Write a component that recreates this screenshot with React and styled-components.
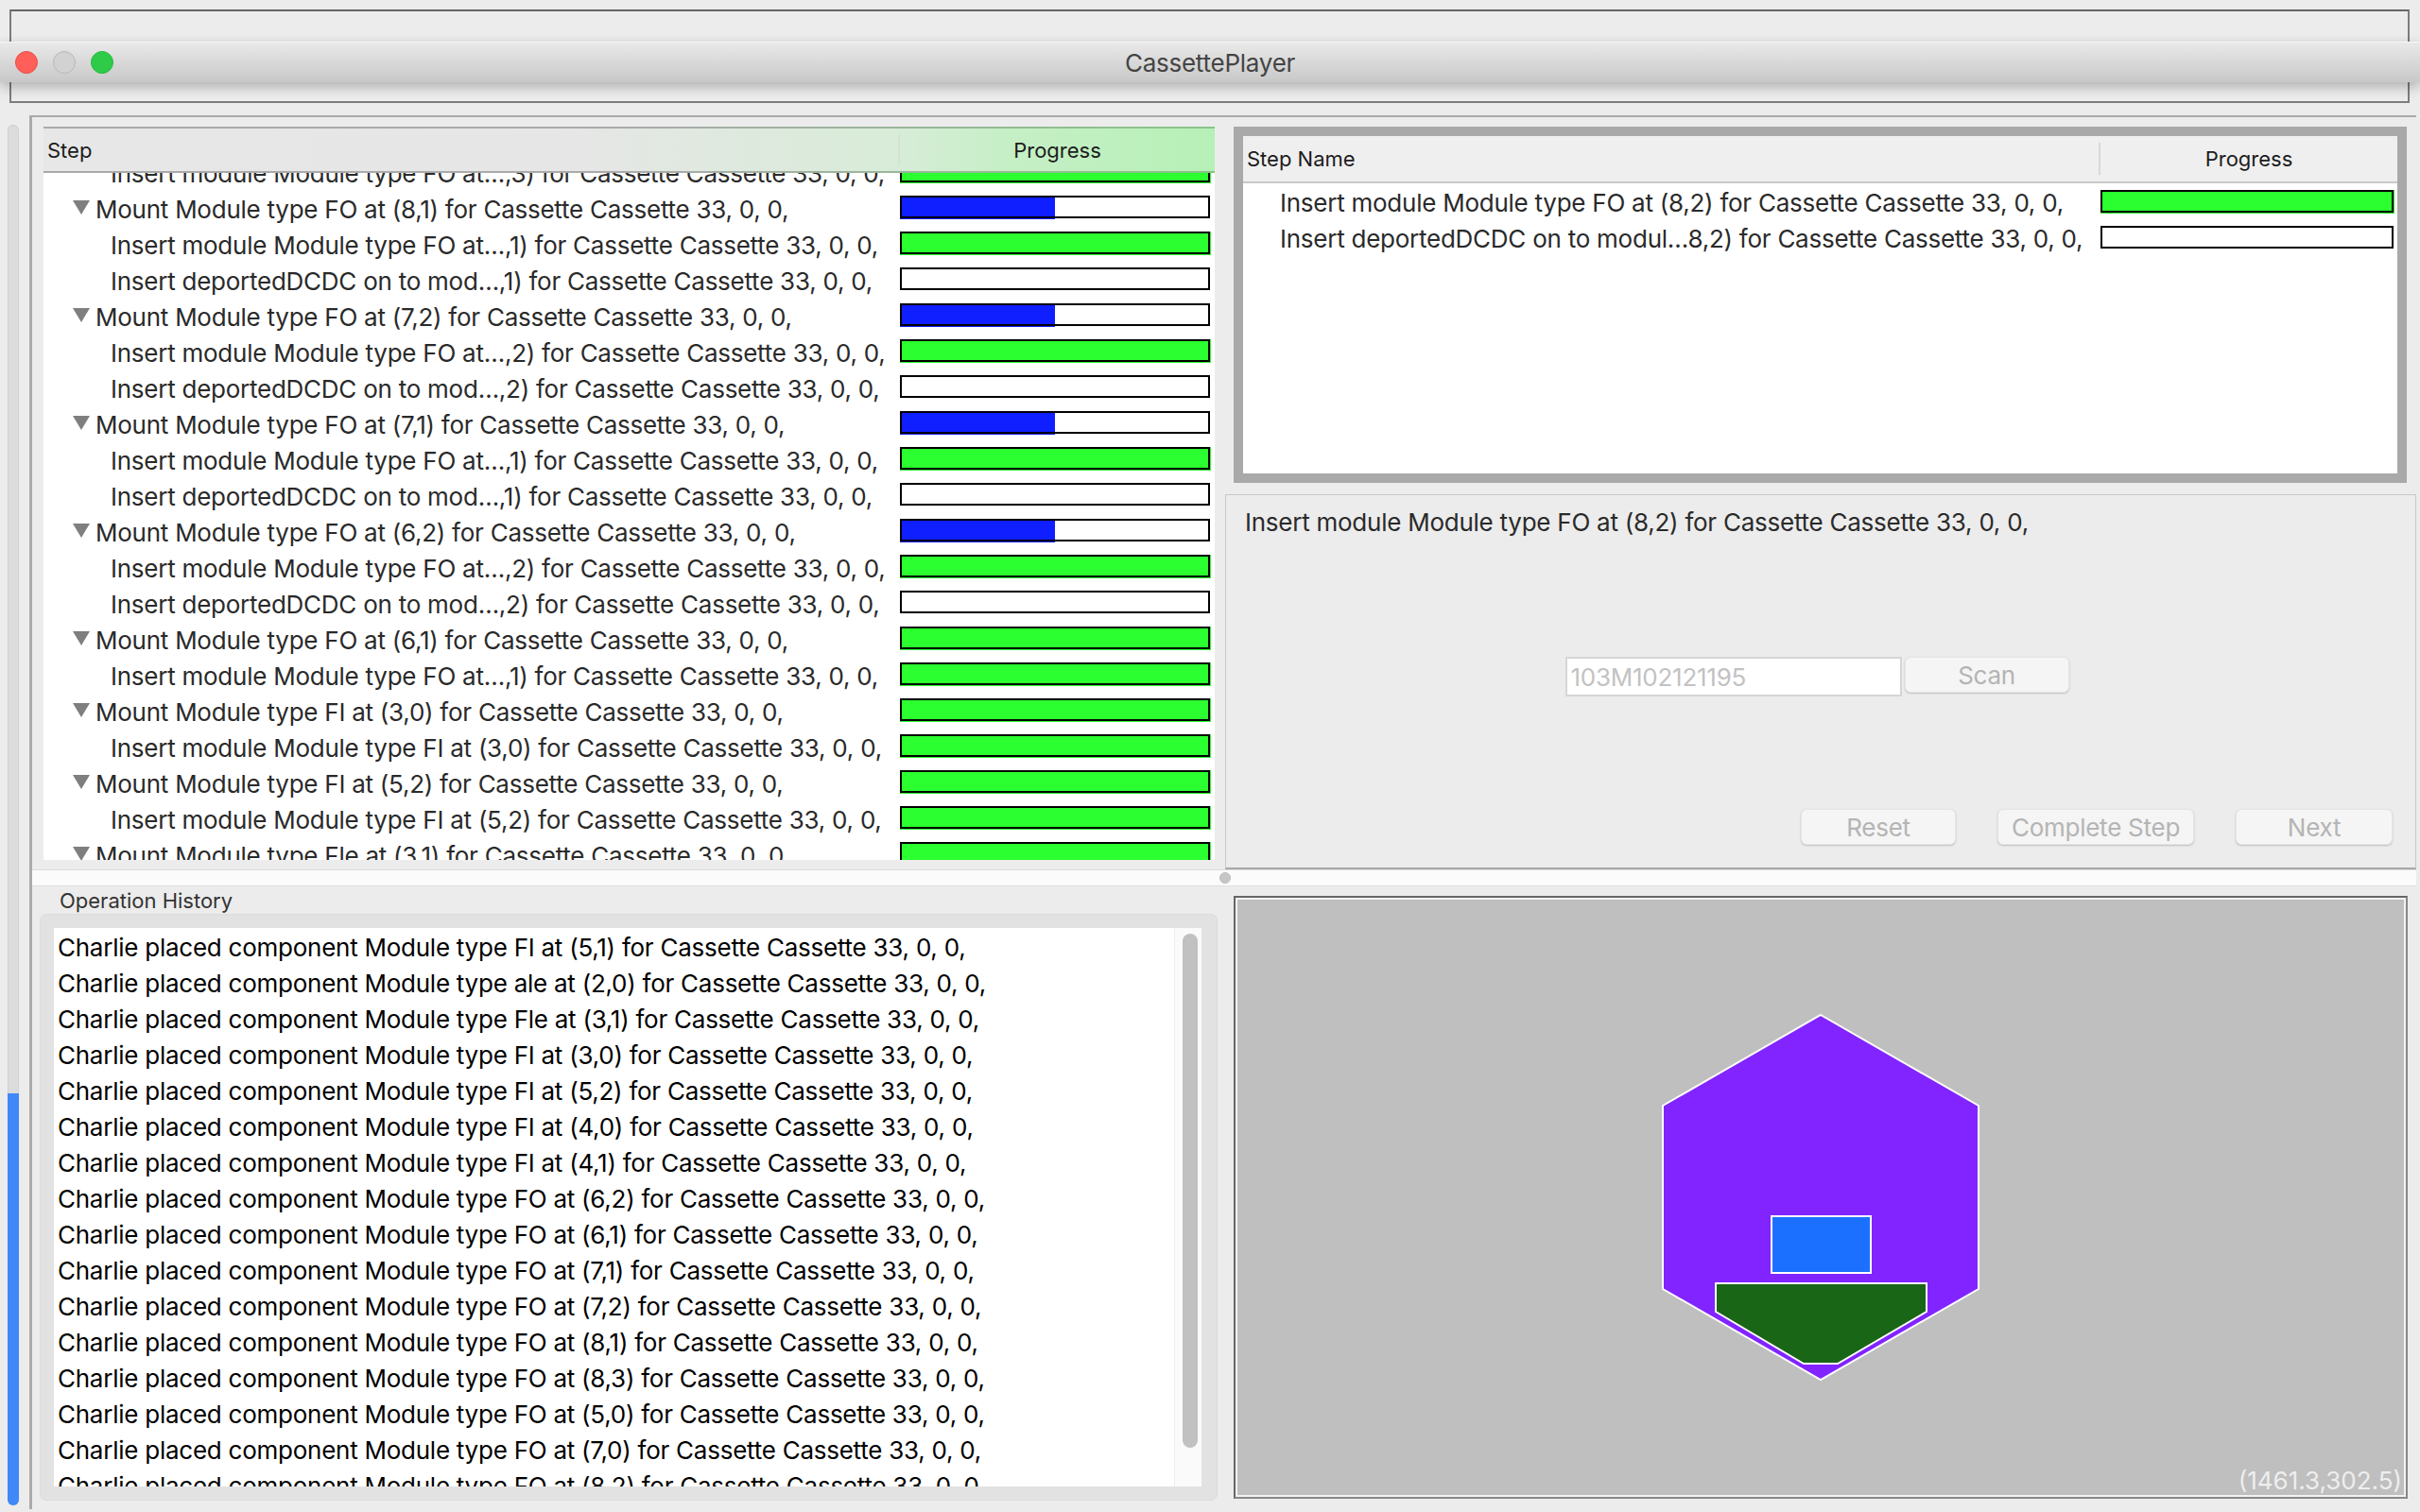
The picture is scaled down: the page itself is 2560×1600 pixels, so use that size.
import React from "react";
import styled, { createGlobalStyle } from "styled-components";

const GlobalStyle = createGlobalStyle`
  html, body {
    margin: 0;
    padding: 0;
    background: #ececec;
  }
  * {
    box-sizing: border-box;
  }
`;

const Page = styled.div`
  position: relative;
  width: 2560px;
  height: 1600px;
  overflow: hidden;
  background: #ececec;
  font-family: Inter, "Liberation Sans", sans-serif;
  font-size: 26px;
  letter-spacing: -0.25px;
  color: #2a2a2a;
`;

const TopFrame = styled.div`
  width: 2539px;
  height: 99px;
  margin: 10px 0 0 10px;
  border: 2px solid #7c7c7c;
  border-top-color: #666;
`;

const TitleBar = styled.div`
  position: absolute;
  top: 44px;
  left: 0;
  right: 0;
  height: 43px;
  display: flex;
  align-items: center;
  justify-content: center;
  background: linear-gradient(180deg, #e9e9e9 0%, #c8c8c8 100%);
  border-top: 1px solid #f6f6f6;
  box-shadow: 0 5px 14px rgba(0, 0, 0, 0.26);
  color: #444;
`;

const Lights = styled.div`
  position: absolute;
  left: 16px;
  top: 9px;
  display: flex;
  gap: 16px;
`;

const Light = styled.span`
  width: 24px;
  height: 24px;
  border-radius: 50%;
  background: ${(p) => p.$color};
  border: 1px solid ${(p) => p.$edge};
`;

const Body = styled.div`
  display: flex;
  margin-top: 13px;
`;

const WindowScroll = styled.div`
  display: flex;
  flex-direction: column;
  justify-content: flex-end;
  width: 12px;
  height: 1461px;
  margin: 10px 11px 0 8px;
  border-radius: 6px;
  background: #dcdcdc;
  box-shadow: inset 0 0 0 1px #d0d0d0;
`;

const WindowThumb = styled.div`
  height: 436px;
  border-radius: 0 0 6px 6px;
  background: #3f88f8;
`;

const MainFrame = styled.div`
  width: 2525px;
  height: 1475px;
  border-top: 2px solid #aaa;
  border-left: 3px solid #aaa;
`;

const TopRow = styled.div`
  display: flex;
  height: 796px;
`;

const TreePane = styled.div`
  width: 1262px;
  padding: 10px 11px 10px 12px;
`;

const TreeTable = styled.div`
  display: flex;
  flex-direction: column;
  height: 100%;
  background: #fff;
`;

const Header = styled.div`
  flex: none;
  display: flex;
  align-items: center;
  height: ${(p) => p.$height}px;
  font-size: 22px;
  letter-spacing: 0;
  color: #1c1c1c;
  border-bottom: 2px solid #c9c9c9;
`;

const TreeHeader = styled(Header)`
  position: relative;
  z-index: 1;
  border-top: 2px solid #aaa;
  border-image: linear-gradient(90deg, #aaa 0%, #aaa 50%, #88c488 100%) 1;
  border-bottom: 2px solid #c4c4c4;
  border-image-slice: 1;
  background: linear-gradient(90deg, #e7e7e7 0%, #e6e6e6 45%, #d8ecd8 73%, #c6efc6 82%, #b7f0b7 100%);
`;

const StepCell = styled.div`
  width: ${(p) => p.$width}px;
  padding-left: 4px;
`;

const ProgressCell = styled.div`
  flex: 1;
  height: 34px;
  line-height: 34px;
  text-align: center;
  border-left: 2px solid ${(p) => p.$divider};
`;

const RowClip = styled.div`
  flex: 1;
  overflow: hidden;
`;

const TreeRows = styled.div`
  margin-top: -21px;
`;

const Row = styled.div`
  display: flex;
  align-items: center;
  height: 38px;
  white-space: nowrap;
`;

const StepText = styled.div`
  display: flex;
  align-items: center;
  width: ${(p) => p.$width}px;
  padding-left: ${(p) => p.$indent}px;
  padding-top: ${(p) => p.$nudge}px;
  overflow: hidden;
`;

const Disclosure = styled.span`
  flex: none;
  width: 0;
  height: 0;
  margin: 0 6px 4px 0;
  border-left: 9px solid transparent;
  border-right: 9px solid transparent;
  border-top: 15px solid #7f7f7f;
`;

const Track = styled.div`
  position: relative;
  flex: none;
  width: ${(p) => p.$width}px;
  height: 24px;
  background: #fff;
  &::after {
    content: "";
    position: absolute;
    inset: 0;
    border: 2px solid #000;
  }
`;

const Fill = styled.div`
  position: absolute;
  left: 0;
  top: 0;
  height: 25px;
  width: calc(${(p) => p.$value}% + ${(p) => (p.$value === 100 ? 1 : 0)}px);
  background: ${(p) => (p.$value === 100 ? "#2bff2f" : "#0f1fff")};
`;

const RightPane = styled.div`
  display: flex;
  flex-direction: column;
  flex: 1;
`;

const ResultFrame = styled.div`
  height: 377px;
  margin: 10px 10px 0 9px;
  border: 10px solid #a9a9a9;
  background: #fff;
`;

const ResultHeader = styled(Header)`
  background: #efefef;
`;

const DetailPanel = styled.div`
  display: flex;
  flex-direction: column;
  height: 397px;
  margin-top: 12px;
  padding: 14px 24px 0 20px;
  border: 1px solid #c8c8c8;
  border-bottom: 2px solid #a8a8a8;
`;

const DetailTitle = styled.div`
  height: 30px;
  line-height: 30px;
`;

const ScanRow = styled.div`
  display: flex;
  align-items: flex-start;
  justify-content: center;
  gap: 3px;
  margin: 127px 0 0 -4px;
`;

const ScanInput = styled.input`
  width: 356px;
  height: 42px;
  padding: 0 4px;
  background: #fff;
  border: 2px solid #d6d6d6;
  border-radius: 0;
  outline: none;
  font: inherit;
  letter-spacing: inherit;
  color: #c2c2c2;
  -webkit-text-fill-color: #c2c2c2;
  opacity: 1;
`;

const Button = styled.div`
  display: flex;
  align-items: center;
  justify-content: center;
  width: ${(p) => p.$width}px;
  height: 38px;
  background: #f5f5f5;
  border: 1px solid #e4e4e4;
  border-radius: 6px;
  box-shadow: 0 1px 2px rgba(0, 0, 0, 0.2);
  color: #b4b4b4;
`;

const ActionRow = styled.div`
  display: flex;
  justify-content: flex-end;
  gap: 44px;
  margin-top: 119px;
`;

const Splitter = styled.div`
  display: flex;
  align-items: center;
  height: 18px;
  padding-left: 1256px;
  background: #fbfbfb;
  border-top: 1px solid #dedede;
  border-bottom: 1px solid #dedede;
`;

const SplitHandle = styled.div`
  width: 12px;
  height: 12px;
  border-radius: 50%;
  background: #c6c6c6;
  border: 1px solid #bcbcbc;
`;

const BottomRow = styled.div`
  display: flex;
  height: 659px;
`;

const HistoryPane = styled.div`
  width: 1262px;
  padding-left: 8px;
`;

const HistoryLabel = styled.div`
  height: 29px;
  padding-left: 21px;
  font-size: 22px;
  letter-spacing: 0;
  line-height: 30px;
  color: #333;
`;

const HistoryBox = styled.div`
  display: flex;
  width: 1246px;
  height: 621px;
  padding: 14px 16px 14px 14px;
  border: 1px solid #dcdcdc;
  border-radius: 7px;
  background: #e2e2e2;
`;

const HistoryList = styled.div`
  flex: 1;
  padding: 2px 0 0 4px;
  overflow: hidden;
  background: #fff;
  color: #000;
`;

const HistoryRow = styled.div`
  height: 38px;
  line-height: 38px;
  white-space: nowrap;
`;

const ListTrack = styled.div`
  flex: none;
  width: 29px;
  padding: 6px 4px 0 8px;
  background: #fafafa;
  border-left: 1px solid #eee;
`;

const ListThumb = styled.div`
  width: 16px;
  height: 544px;
  border-radius: 8px;
  background: #c1c1c1;
`;

const Canvas = styled.div`
  position: relative;
  width: 1242px;
  height: 638px;
  margin: 10px 0 0 9px;
  background: #bfbfbf;
  border: 2px solid #666;
  border-right-color: #888;
  border-bottom-color: #888;
  outline: 2px solid #f2f2f2;
  outline-offset: -4px;
`;

const Drawing = styled.svg`
  display: block;
  margin: 2px;
`;

const Coords = styled.div`
  position: absolute;
  right: 4px;
  bottom: 2px;
  color: #eeeeee;
  letter-spacing: 0;
`;

const MOUNT = 31;
const CHILD = 71;
const tail = "for Cassette Cassette 33, 0, 0,";

const treeRows = [
  { text: `Insert module Module type FO at…,3) ${tail}`, value: 100 },
  { text: `Mount Module type FO at (8,1) ${tail}`, value: 50, parent: true },
  { text: `Insert module Module type FO at…,1) ${tail}`, value: 100 },
  { text: `Insert deportedDCDC on to mod…,1) ${tail}`, value: 0 },
  { text: `Mount Module type FO at (7,2) ${tail}`, value: 50, parent: true },
  { text: `Insert module Module type FO at…,2) ${tail}`, value: 100 },
  { text: `Insert deportedDCDC on to mod…,2) ${tail}`, value: 0 },
  { text: `Mount Module type FO at (7,1) ${tail}`, value: 50, parent: true },
  { text: `Insert module Module type FO at…,1) ${tail}`, value: 100 },
  { text: `Insert deportedDCDC on to mod…,1) ${tail}`, value: 0 },
  { text: `Mount Module type FO at (6,2) ${tail}`, value: 50, parent: true },
  { text: `Insert module Module type FO at…,2) ${tail}`, value: 100 },
  { text: `Insert deportedDCDC on to mod…,2) ${tail}`, value: 0 },
  { text: `Mount Module type FO at (6,1) ${tail}`, value: 100, parent: true },
  { text: `Insert module Module type FO at…,1) ${tail}`, value: 100 },
  { text: `Mount Module type FI at (3,0) ${tail}`, value: 100, parent: true },
  { text: `Insert module Module type FI at (3,0) ${tail}`, value: 100 },
  { text: `Mount Module type FI at (5,2) ${tail}`, value: 100, parent: true },
  { text: `Insert module Module type FI at (5,2) ${tail}`, value: 100 },
  { text: `Mount Module type Fle at (3,1) ${tail}`, value: 100, parent: true },
];

const history = [
  "FI at (5,1)",
  "ale at (2,0)",
  "Fle at (3,1)",
  "FI at (3,0)",
  "FI at (5,2)",
  "FI at (4,0)",
  "FI at (4,1)",
  "FO at (6,2)",
  "FO at (6,1)",
  "FO at (7,1)",
  "FO at (7,2)",
  "FO at (8,1)",
  "FO at (8,3)",
  "FO at (5,0)",
  "FO at (7,0)",
  "FO at (8,2)",
];

function ProgressBar({ width, value }) {
  return (
    <Track $width={width}>
      <Fill $value={value} />
    </Track>
  );
}

export default function App() {
  return (
    <Page>
      <GlobalStyle />
      <TopFrame />
      <TitleBar>
        <Lights>
          <Light $color="#ff5f58" $edge="#e9504a" />
          <Light $color="#d2d2d2" $edge="#b8b8b8" />
          <Light $color="#2ecb48" $edge="#29b840" />
        </Lights>
        CassettePlayer
      </TitleBar>
      <Body>
        <WindowScroll>
          <WindowThumb />
        </WindowScroll>
        <MainFrame>
          <TopRow>
            <TreePane>
              <TreeTable>
                <TreeHeader $height={49}>
                  <StepCell $width={904}>Step</StepCell>
                  <ProgressCell $divider="#d4e4d4">Progress</ProgressCell>
                </TreeHeader>
                <RowClip>
                  <TreeRows>
                    {treeRows.map((row, i) => (
                      <Row key={i}>
                        <StepText
                          $width={906}
                          $indent={row.parent ? MOUNT : CHILD}
                          $nudge={5}
                        >
                          {row.parent && <Disclosure />}
                          {row.text}
                        </StepText>
                        <ProgressBar width={328} value={row.value} />
                      </Row>
                    ))}
                  </TreeRows>
                </RowClip>
              </TreeTable>
            </TreePane>
            <RightPane>
              <ResultFrame>
                <ResultHeader $height={50}>
                  <StepCell $width={905}>Step Name</StepCell>
                  <ProgressCell $divider="#d8d8d8">Progress</ProgressCell>
                </ResultHeader>
                <Row>
                  <StepText $width={907} $indent={39} $nudge={2}>
                    Insert module Module type FO at (8,2) for Cassette Cassette 33, 0, 0,
                  </StepText>
                  <ProgressBar width={310} value={100} />
                </Row>
                <Row>
                  <StepText $width={907} $indent={39} $nudge={2}>
                    Insert deportedDCDC on to modul…8,2) for Cassette Cassette 33, 0, 0,
                  </StepText>
                  <ProgressBar width={310} value={0} />
                </Row>
              </ResultFrame>
              <DetailPanel>
                <DetailTitle>
                  Insert module Module type FO at (8,2) for Cassette Cassette 33, 0, 0,
                </DetailTitle>
                <ScanRow>
                  <ScanInput value="103M102121195" readOnly />
                  <Button $width={174}>Scan</Button>
                </ScanRow>
                <ActionRow>
                  <Button $width={164}>Reset</Button>
                  <Button $width={208}>Complete Step</Button>
                  <Button $width={166}>Next</Button>
                </ActionRow>
              </DetailPanel>
            </RightPane>
          </TopRow>
          <Splitter>
            <SplitHandle />
          </Splitter>
          <BottomRow>
            <HistoryPane>
              <HistoryLabel>Operation History</HistoryLabel>
              <HistoryBox>
                <HistoryList>
                  {history.map((item, i) => (
                    <HistoryRow key={i}>
                      Charlie placed component Module type {item} {tail}
                    </HistoryRow>
                  ))}
                </HistoryList>
                <ListTrack>
                  <ListThumb />
                </ListTrack>
              </HistoryBox>
            </HistoryPane>
            <Canvas>
              <Drawing width="1234" height="630" viewBox="1308 952 1234 630">
                <g stroke="#fff" strokeWidth="2">
                  <polygon
                    points="1925,1074 2092,1170 2092,1364 1925,1460 1758,1364 1758,1170"
                    fill="#8224ff"
                  />
                  <rect x="1873" y="1287" width="105" height="60" fill="#1c70ff" />
                  <polygon
                    points="1814,1358 2037,1358 2037,1388 1943,1443 1907,1443 1814,1388"
                    fill="#196617"
                  />
                </g>
              </Drawing>
              <Coords>(1461.3,302.5)</Coords>
            </Canvas>
          </BottomRow>
        </MainFrame>
      </Body>
    </Page>
  );
}
